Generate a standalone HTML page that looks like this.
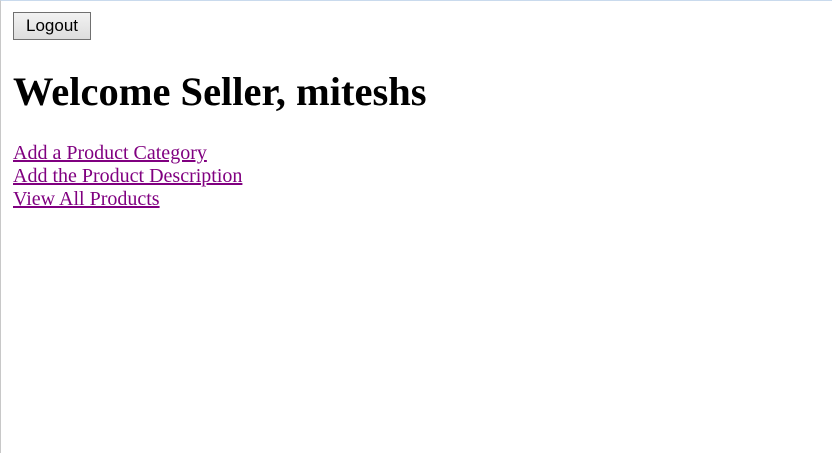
<!DOCTYPE html>
<html><head><meta charset="utf-8"><style>
html,body{margin:0;padding:0;width:832px;height:453px;overflow:hidden;background:#fff;}
.frame{position:absolute;left:0;top:0;width:831px;height:452px;border-top:1px solid #c9daed;border-left:1px solid #c8c8c8;}
.btn{position:absolute;left:13px;top:12px;width:76px;height:26px;border:1px solid #707070;background:linear-gradient(#f2f2f2,#dddddd);font:17px "Liberation Sans",sans-serif;color:#000;text-align:center;line-height:26px;box-sizing:content-box;}
h1{position:absolute;left:13px;top:72px;margin:0;font:bold 40.5px/1 "Liberation Serif",serif;color:#000;white-space:nowrap;}
a{position:absolute;left:13px;font:20px/1 "Liberation Serif",serif;color:#800080;text-decoration:underline;white-space:nowrap;}
</style></head><body>
<div class="frame"></div>
<div class="btn">Logout</div>
<h1>Welcome Seller, miteshs</h1>
<a style="top:143px">Add a Product Category</a>
<a style="top:166px">Add the Product Description</a>
<a style="top:189px">View All Products</a>
</body></html>
